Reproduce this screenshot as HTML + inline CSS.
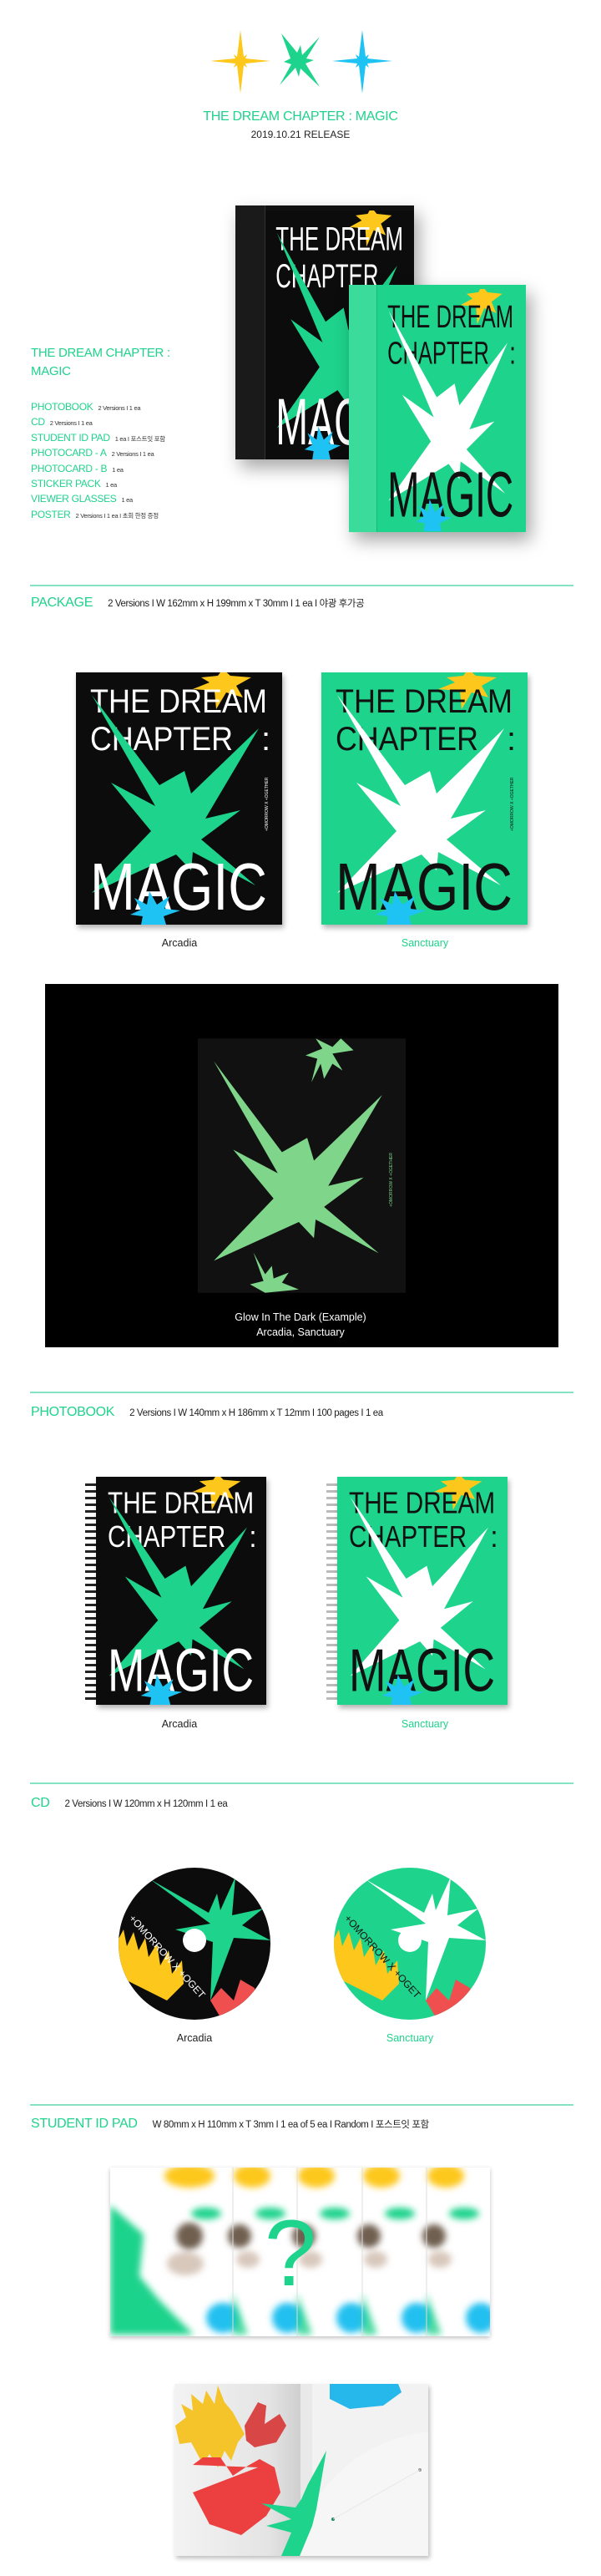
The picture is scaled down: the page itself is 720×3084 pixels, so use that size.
<!DOCTYPE html>
<html><head><meta charset="utf-8">
<style>
*{margin:0;padding:0;box-sizing:border-box}
html,body{width:720px;height:3084px;overflow:hidden}
body{background:#fff;position:relative;font-family:"Liberation Sans","Noto Sans CJK KR",sans-serif;color:#222}
.a{position:absolute}
.g{color:#1fd38c}
.line{position:absolute;left:36px;width:651px;height:2px;background:#86e3c2}
.sec{position:absolute;left:37px;font-size:16px;color:#1fd38c;white-space:nowrap;letter-spacing:-0.3px}
.sec span{font-size:11.5px;color:#222;margin-left:18px;letter-spacing:-0.4px}
.lab{position:absolute;font-size:12.5px;width:140px;text-align:center}
.list div{font-size:12px;color:#1fd38c;height:18.4px;white-space:nowrap;letter-spacing:-0.3px}
.list span{font-size:7.5px;color:#333;margin-left:6px}
.cv{position:absolute;box-shadow:2px 4px 6px rgba(0,0,0,.3)}
svg text{font-family:"Liberation Sans",sans-serif}
</style></head><body>

<svg class="a" style="left:240px;top:30px" width="240" height="90" viewBox="0 0 240 90">
<polygon fill="#fdc81b" points="48,6 52,38 56,35 54,40 84,43 54,46 56,51 52,48 48,82 44,48 40,51 42,46 12,43 42,40 40,35 44,38"/>
<polygon fill="#1ed38c" points="97,10 116,33 120,24 122,36 143,14 127,40 136,42 126,46 143,74 120,52 118,62 114,51 95,72 109,47 100,44 108,40"/>
<polygon fill="#1ec3f3" points="194,6 198,38 202,35 200,40 230,43 200,46 202,51 198,48 194,82 190,48 186,51 188,46 158,43 188,40 186,35 190,38"/>
</svg>
<div class="a g" style="left:0;width:720px;top:131px;text-align:center;font-size:16px;letter-spacing:-0.3px">THE DREAM CHAPTER : MAGIC</div>
<div class="a" style="left:0;width:720px;top:154px;text-align:center;font-size:12px">2019.10.21 RELEASE</div>

<div class="a" style="left:282px;top:246px;width:214px;height:304px;background:#111;box-shadow:6px 10px 20px rgba(0,0,0,.35)"></div>
<div class="a" style="left:282px;top:246px;width:36px;height:304px;background:#1a1a1a;border-right:1px solid #333"></div>
<svg class="a" style="left:318px;top:252px" width="178" height="298" viewBox="0 0 247 302" preserveAspectRatio="none">
<rect width="247" height="302" fill="#0c0c0c"/>
<polygon fill="#fdc81b" points="150,6 170,4 176,-4 185,4 210,6 192,16 200,30 180,24 168,44 166,22 140,20 160,12"/>
<text x="17" y="48" font-size="40" fill="#fff" textLength="212" lengthAdjust="spacingAndGlyphs">THE DREAM</text>
<text x="17" y="93" font-size="40" fill="#fff" textLength="171" lengthAdjust="spacingAndGlyphs">CHAPTER</text>
<polygon fill="#1ed38c" points="19,27 100,135 130,118 138,145 219,67 155,175 197,165 150,200 215,255 140,215 138,237 120,218 19,264 90,190 42,132 95,160"/>
<text x="17" y="284" font-size="80" fill="#fff" textLength="212" lengthAdjust="spacingAndGlyphs">MAGIC</text>
<polygon fill="#1ec3f3" points="70,270 85,278 88,262 97,278 112,268 106,283 125,285 105,292 108,302 78,302 80,292 65,290 78,284"/>
</svg>
<div class="a" style="left:418px;top:341px;width:212px;height:296px;background:#1ed38c;box-shadow:6px 10px 20px rgba(0,0,0,.35)"></div>
<div class="a" style="left:418px;top:341px;width:34px;height:296px;background:#3bdc9b;border-right:1px solid #17b878"></div>
<svg class="a" style="left:452px;top:346px" width="176" height="290" viewBox="0 0 247 302" preserveAspectRatio="none">
<rect width="247" height="302" fill="#1ed38c"/>
<polygon fill="#fdc81b" points="150,6 170,4 176,-4 185,4 210,6 192,16 200,30 180,24 168,44 166,22 140,20 160,12"/>
<text x="17" y="48" font-size="40" fill="#111" textLength="212" lengthAdjust="spacingAndGlyphs">THE DREAM</text>
<text x="17" y="93" font-size="40" fill="#111" textLength="171" lengthAdjust="spacingAndGlyphs">CHAPTER</text>
<text x="222" y="93" font-size="40" fill="#111">:</text>
<polygon fill="#fff" points="19,27 100,135 130,118 138,145 219,67 155,175 197,165 150,200 215,255 140,215 138,237 120,218 19,264 90,190 42,132 95,160"/>
<text x="17" y="284" font-size="80" fill="#111" textLength="212" lengthAdjust="spacingAndGlyphs">MAGIC</text>
<polygon fill="#1ec3f3" points="70,270 85,278 88,262 97,278 112,268 106,283 125,285 105,292 108,302 78,302 80,292 65,290 78,284"/>
</svg>

<div class="a g" style="left:37px;top:412px;font-size:15px;line-height:22px;letter-spacing:-0.3px">THE DREAM CHAPTER :<br>MAGIC</div>
<div class="a list" style="left:37px;top:480px">
<div>PHOTOBOOK<span>2 Versions I 1 ea</span></div>
<div>CD<span>2 Versions I 1 ea</span></div>
<div>STUDENT ID PAD<span>1 ea I 포스트잇 포함</span></div>
<div>PHOTOCARD - A<span>2 Versions I 1 ea</span></div>
<div>PHOTOCARD - B<span>1 ea</span></div>
<div>STICKER PACK<span>1 ea</span></div>
<div>VIEWER GLASSES<span>1 ea</span></div>
<div>POSTER<span>2 Versions I 1 ea I 초회 한정 증정</span></div>
</div>

<div class="line" style="top:700px"></div>
<div class="sec" style="top:713px">PACKAGE<span>2 Versions I W 162mm x H 199mm x T 30mm I 1 ea I 야광 후가공</span></div>

<svg class="cv" style="left:91px;top:805px" width="247" height="302" viewBox="0 0 247 302">
<rect width="247" height="302" fill="#0c0c0c"/>
<polygon fill="#fdc81b" points="150,6 170,4 176,-4 185,4 210,6 192,16 200,30 180,24 168,44 166,22 140,20 160,12"/>
<text x="17" y="48" font-size="40" fill="#fff" textLength="212" lengthAdjust="spacingAndGlyphs">THE DREAM</text>
<text x="17" y="93" font-size="40" fill="#fff" textLength="171" lengthAdjust="spacingAndGlyphs">CHAPTER</text>
<text x="222" y="93" font-size="40" fill="#fff">:</text>
<polygon fill="#1ed38c" points="19,27 100,135 130,118 138,145 219,67 155,175 197,165 150,200 215,255 140,215 138,237 120,218 19,264 90,190 42,132 95,160"/>
<text x="17" y="284" font-size="80" fill="#fff" textLength="212" lengthAdjust="spacingAndGlyphs">MAGIC</text>
<polygon fill="#1ec3f3" points="70,270 85,278 88,262 97,278 112,268 106,283 125,285 105,292 108,302 78,302 80,292 65,290 78,284"/>
<text transform="translate(230,190) rotate(-90)" font-size="5" fill="#fff">+OMORROW X +OGETHER</text>
</svg>
<svg class="cv" style="left:385px;top:805px" width="247" height="302" viewBox="0 0 247 302">
<rect width="247" height="302" fill="#1ed38c"/>
<polygon fill="#fdc81b" points="150,6 170,4 176,-4 185,4 210,6 192,16 200,30 180,24 168,44 166,22 140,20 160,12"/>
<text x="17" y="48" font-size="40" fill="#111" textLength="212" lengthAdjust="spacingAndGlyphs">THE DREAM</text>
<text x="17" y="93" font-size="40" fill="#111" textLength="171" lengthAdjust="spacingAndGlyphs">CHAPTER</text>
<text x="222" y="93" font-size="40" fill="#111">:</text>
<polygon fill="#fff" points="19,27 100,135 130,118 138,145 219,67 155,175 197,165 150,200 215,255 140,215 138,237 120,218 19,264 90,190 42,132 95,160"/>
<text x="17" y="284" font-size="80" fill="#111" textLength="212" lengthAdjust="spacingAndGlyphs">MAGIC</text>
<polygon fill="#1ec3f3" points="70,270 85,278 88,262 97,278 112,268 106,283 125,285 105,292 108,302 78,302 80,292 65,290 78,284"/>
<text transform="translate(230,190) rotate(-90)" font-size="5" fill="#111">+OMORROW X +OGETHER</text>
</svg>
<div class="lab" style="left:145px;top:1122px">Arcadia</div>
<div class="lab g" style="left:439px;top:1122px">Sanctuary</div>

<div class="a" style="left:54px;top:1178px;width:615px;height:435px;background:#000"></div>
<svg class="a" style="left:237px;top:1243px" width="249" height="305" viewBox="0 0 247 302">
<rect width="247" height="302" fill="#111"/>
<polygon fill="#7fd68a" points="140,0 160,10 170,0 185,14 160,18 172,38 160,30 150,48 146,30 135,52 142,24 128,20 148,12"/>
<polygon fill="#7fd68a" points="19,27 100,135 130,118 138,145 219,67 155,175 197,165 150,200 215,255 140,215 138,237 120,218 19,264 90,190 42,132 95,160"/>
<polygon fill="#7fd68a" points="66,254 80,280 88,270 90,285 108,278 100,290 120,298 80,302 62,292 78,288"/>
<text transform="translate(231,200) rotate(-90)" font-size="5" fill="#7fd68a">+OMORROW X +OGETHER</text>
</svg>
<div class="a" style="left:0;width:720px;top:1568px;text-align:center;color:#fff;font-size:12.5px;line-height:18px">Glow In The Dark (Example)<br>Arcadia, Sanctuary</div>

<div class="line" style="top:1666px"></div>
<div class="sec" style="top:1682px">PHOTOBOOK<span>2 Versions I W 140mm x H 186mm x T 12mm I 100 pages I 1 ea</span></div>

<div class="a" style="left:102px;top:1776px;width:16px;height:262px;background:repeating-linear-gradient(180deg,#222 0 3px,#fff 3px 8px)"></div>
<svg class="cv" style="left:115px;top:1768px" width="204" height="273" viewBox="0 0 247 302" preserveAspectRatio="none">
<rect width="247" height="302" fill="#0c0c0c"/>
<polygon fill="#fdc81b" points="150,6 170,4 176,-4 185,4 210,6 192,16 200,30 180,24 168,44 166,22 140,20 160,12"/>
<text x="17" y="48" font-size="40" fill="#fff" textLength="212" lengthAdjust="spacingAndGlyphs">THE DREAM</text>
<text x="17" y="93" font-size="40" fill="#fff" textLength="171" lengthAdjust="spacingAndGlyphs">CHAPTER</text>
<text x="222" y="93" font-size="40" fill="#fff">:</text>
<polygon fill="#1ed38c" points="19,27 100,135 130,118 138,145 219,67 155,175 197,165 150,200 215,255 140,215 138,237 120,218 19,264 90,190 42,132 95,160"/>
<text x="17" y="284" font-size="80" fill="#fff" textLength="212" lengthAdjust="spacingAndGlyphs">MAGIC</text>
<polygon fill="#1ec3f3" points="70,270 85,278 88,262 97,278 112,268 106,283 125,285 105,292 108,302 78,302 80,292 65,290 78,284"/>
</svg>
<div class="a" style="left:391px;top:1776px;width:16px;height:262px;background:repeating-linear-gradient(180deg,#bbb 0 3px,#fff 3px 8px)"></div>
<svg class="cv" style="left:404px;top:1768px" width="204" height="273" viewBox="0 0 247 302" preserveAspectRatio="none">
<rect width="247" height="302" fill="#1ed38c"/>
<polygon fill="#fdc81b" points="150,6 170,4 176,-4 185,4 210,6 192,16 200,30 180,24 168,44 166,22 140,20 160,12"/>
<text x="17" y="48" font-size="40" fill="#111" textLength="212" lengthAdjust="spacingAndGlyphs">THE DREAM</text>
<text x="17" y="93" font-size="40" fill="#111" textLength="171" lengthAdjust="spacingAndGlyphs">CHAPTER</text>
<text x="222" y="93" font-size="40" fill="#111">:</text>
<polygon fill="#fff" points="19,27 100,135 130,118 138,145 219,67 155,175 197,165 150,200 215,255 140,215 138,237 120,218 19,264 90,190 42,132 95,160"/>
<text x="17" y="284" font-size="80" fill="#111" textLength="212" lengthAdjust="spacingAndGlyphs">MAGIC</text>
<polygon fill="#1ec3f3" points="70,270 85,278 88,262 97,278 112,268 106,283 125,285 105,292 108,302 78,302 80,292 65,290 78,284"/>
</svg>
<div class="lab" style="left:145px;top:2057px">Arcadia</div>
<div class="lab g" style="left:439px;top:2057px">Sanctuary</div>

<div class="line" style="top:2134px"></div>
<div class="sec" style="top:2150px">CD<span>2 Versions I W 120mm x H 120mm I 1 ea</span></div>
<svg class="a" style="left:140px;top:2235px" width="450" height="186" viewBox="0 0 450 186">
<defs><clipPath id="c1"><circle cx="93" cy="92" r="91"/></clipPath><clipPath id="c2"><circle cx="351" cy="92" r="91"/></clipPath></defs>
<g clip-path="url(#c1)">
<rect width="190" height="190" fill="#0c0c0c"/>
<polygon fill="#fdc81b" points="0,90 8,75 12,95 20,78 26,100 34,85 38,108 48,92 52,118 62,100 66,128 78,112 80,140 60,160 0,130"/>
<polygon fill="#1ed38c" points="40,15 110,55 120,32 124,52 142,12 138,58 175,50 150,70 184,88 140,85 112,160 115,90 70,75 112,68"/>
<polygon fill="#ef4f4f" points="112,160 125,145 140,160 148,135 165,145 170,175 130,190"/>
<text transform="translate(14,62) rotate(48)" font-size="12" fill="#fff">+OMORROW X +OGET</text>
</g>
<circle cx="93" cy="88" r="14" fill="#fff"/>
<g clip-path="url(#c2)">
<rect x="258" width="190" height="190" fill="#1ed38c"/>
<polygon fill="#fdc81b" points="258,90 266,75 270,95 278,78 284,100 292,85 296,108 306,92 310,118 320,100 324,128 336,112 338,140 318,160 258,130"/>
<polygon fill="#fff" points="298,15 368,55 378,32 382,52 400,12 396,58 433,50 408,70 442,88 398,85 370,160 373,90 328,75 370,68"/>
<polygon fill="#ef4f4f" points="370,160 383,145 398,160 406,135 423,145 428,175 388,190"/>
<text transform="translate(272,62) rotate(48)" font-size="12" fill="#111">+OMORROW X +OGET</text>
</g>
<circle cx="351" cy="88" r="14" fill="#fff"/>
</svg>
<div class="lab" style="left:163px;top:2433px">Arcadia</div>
<div class="lab g" style="left:421px;top:2433px">Sanctuary</div>

<div class="line" style="top:2519px"></div>
<div class="sec" style="top:2534px">STUDENT ID PAD<span>W 80mm x H 110mm x T 3mm I 1 ea of 5 ea I Random I 포스트잇 포함</span></div>
<div class="a" style="left:132px;top:2595px;width:455px;height:202px;background:#fff;box-shadow:0 2px 5px rgba(0,0,0,.25);overflow:hidden">
<svg width="455" height="202" viewBox="0 0 455 202">
<defs><filter id="bl"><feGaussianBlur stdDeviation="4"/></filter></defs>
<g filter="url(#bl)">
<polygon fill="#1ed38c" points="0,45 40,80 35,130 60,160 100,200 0,200"/>
<g fill="#fdc81b"><ellipse cx="95" cy="10" rx="30" ry="14"/><ellipse cx="170" cy="10" rx="22" ry="14"/><ellipse cx="247" cy="10" rx="22" ry="14"/><ellipse cx="325" cy="10" rx="22" ry="14"/><ellipse cx="402" cy="10" rx="22" ry="14"/></g>
<g fill="#1ed38c"><ellipse cx="115" cy="55" rx="18" ry="7"/><ellipse cx="192" cy="55" rx="18" ry="7"/><ellipse cx="269" cy="55" rx="18" ry="7"/><ellipse cx="347" cy="55" rx="18" ry="7"/><ellipse cx="424" cy="55" rx="18" ry="7"/></g>
<g fill="#22c0f0"><ellipse cx="135" cy="180" rx="20" ry="18"/><ellipse cx="212" cy="180" rx="18" ry="18"/><ellipse cx="289" cy="180" rx="18" ry="18"/><ellipse cx="367" cy="180" rx="18" ry="18"/><ellipse cx="444" cy="180" rx="18" ry="18"/></g>
<g fill="#1ed38c" opacity=".8"><polygon points="147,150 165,200 147,200"/><polygon points="224,150 242,200 224,200"/><polygon points="302,150 320,200 302,200"/><polygon points="379,150 397,200 379,200"/></g>
<g fill="#6f5f50"><circle cx="95" cy="82" r="16"/><circle cx="155" cy="82" r="14"/><circle cx="232" cy="82" r="14"/><circle cx="310" cy="82" r="14"/><circle cx="388" cy="82" r="14"/></g>
<g fill="#d8c8bc"><ellipse cx="90" cy="115" rx="22" ry="14"/><ellipse cx="165" cy="110" rx="14" ry="10"/><ellipse cx="240" cy="110" rx="14" ry="10"/><ellipse cx="318" cy="110" rx="14" ry="10"/><ellipse cx="395" cy="110" rx="14" ry="10"/></g>
</g>
<g stroke="#ddd" stroke-width="1"><line x1="147" y1="0" x2="147" y2="202"/><line x1="224" y1="0" x2="224" y2="202"/><line x1="302" y1="0" x2="302" y2="202"/><line x1="379" y1="0" x2="379" y2="202"/></g>
</svg>
</div>
<div class="a" style="left:298px;top:2640px;width:100px;text-align:center;font-size:112px;line-height:116px;color:#1ed38c">?</div>

<svg class="a" style="left:209px;top:2854px;box-shadow:2px 3px 5px rgba(0,0,0,.25)" width="304" height="206" viewBox="0 0 304 206">
<defs><linearGradient id="sp" x1="0" x2="1"><stop offset="0" stop-color="#f3f3f3"/><stop offset=".75" stop-color="#e4e4e4"/><stop offset="1" stop-color="#cfcfcf"/></linearGradient></defs>
<rect width="304" height="206" fill="#f2f2f2"/>
<rect width="151" height="206" fill="url(#sp)"/>
<rect x="151" width="14" height="206" fill="#e9e9e9"/>
<polygon fill="#26b8ea" points="186,0 268,0 272,10 250,26 210,30 186,18"/>
<circle cx="320" cy="235" r="178" fill="#f6f6f6"/>
<polygon fill="#f4c42a" points="1,50 14,40 8,24 22,32 20,12 34,24 38,8 48,24 52,2 60,22 70,34 84,60 76,70 68,92 60,80 52,100 42,84 34,96 20,70 6,72"/>
<polygon fill="#d94646" points="84,50 100,22 110,26 108,48 126,36 134,50 122,70 96,76 86,68"/>
<polygon fill="#ec3f3f" points="100,100 22,97 34,88 55,88 70,110 88,98 102,90 120,100 127,130 110,158 80,181 42,168 22,130"/>
<polygon fill="#1ed38c" points="104,143 145,148 152,138 160,120 182,80 170,150 165,170 150,206 128,206 140,178 110,170 140,162"/>
<circle cx="190" cy="162" r="2" fill="#1a8a5a"/><circle cx="294" cy="103" r="2" fill="#999"/>
<line x1="190" y1="162" x2="294" y2="103" stroke="#e6e6e6"/>
</svg>
</body></html>
